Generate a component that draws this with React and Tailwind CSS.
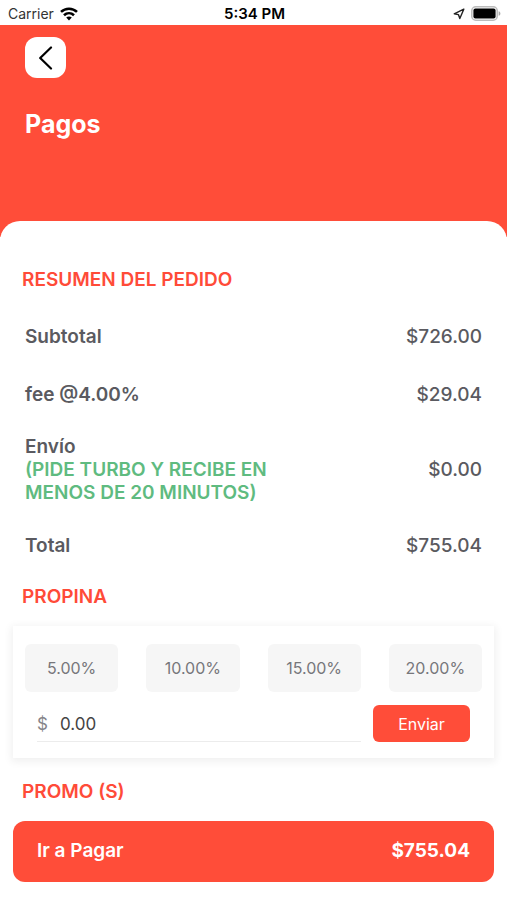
import { useState } from "react";

const summary = [
  { label: "Subtotal", amount: "$726.00" },
  { label: "fee @4.00%", amount: "$29.04" },
  { label: "Envío", note: "(PIDE TURBO Y RECIBE EN MENOS DE 20 MINUTOS)", amount: "$0.00" },
  { label: "Total", amount: "$755.04" },
];

const tips = ["5.00%", "10.00%", "15.00%", "20.00%"];

function WifiIcon() {
  return (
    <svg width="18" height="14" viewBox="0 0 18 14" fill="none" stroke="#000" strokeWidth="2.6" aria-hidden="true">
      <path d="M1 4.9C5.5.7 12.5.7 17 4.9" />
      <path d="M4 8.2C6.9 5.5 11.1 5.5 14 8.2" />
      <path d="M9 13.6 6.2 10.6C7.8 9.1 10.2 9.1 11.8 10.6Z" fill="#000" stroke="none" />
    </svg>
  );
}

function LocationIcon() {
  return (
    <svg width="12" height="12" viewBox="0 0 12 12" fill="none" stroke="#222" strokeWidth="1.4" strokeLinejoin="round" aria-hidden="true">
      <path d="M10.8 1.2 1.2 5.8 5.4 6.6 6.8 10.6Z" />
    </svg>
  );
}

function BatteryIcon() {
  return (
    <svg width="30" height="15" viewBox="0 0 30 15" aria-hidden="true">
      <rect x="0.8" y="0.8" width="25.4" height="13.4" rx="4" fill="#fff" stroke="#bcbcbc" strokeWidth="1.6" />
      <rect x="2.4" y="2.4" width="22.2" height="10.2" rx="2" fill="#000" />
      <path d="M27.6 5.2C30 5.9 30 9.1 27.6 9.8Z" fill="#a8a8a8" />
    </svg>
  );
}

function StatusBar() {
  return (
    <div className="grid h-[25px] grid-cols-3 items-center bg-white pl-2 pr-1.5 pt-0.5 text-sm text-[#333]">
      <div className="flex items-center gap-1.5">
        <span>Carrier</span>
        <WifiIcon />
      </div>
      <span className="text-center text-[15px] font-semibold text-black">5:34 PM</span>
      <div className="flex items-center justify-end gap-1.5">
        <LocationIcon />
        <BatteryIcon />
      </div>
    </div>
  );
}

function SectionTitle({ children }) {
  return <h2 className="px-[22px] text-[19px] font-semibold leading-6 text-[#ff4b38]">{children}</h2>;
}

export default function App() {
  const [tip, setTip] = useState("0.00");

  return (
    <div className="min-h-screen bg-white font-['Inter','Liberation_Sans',sans-serif]">
      <StatusBar />
      <header className="h-[212px] bg-[#ff4d39] px-[25px] pt-3 text-white">
        <button type="button" aria-label="Volver" className="flex size-[41px] items-center justify-center rounded-xl bg-white">
          <svg width="14" height="24" viewBox="0 0 14 24" fill="none" stroke="#000" strokeWidth="2.2" strokeLinecap="round" strokeLinejoin="round" aria-hidden="true">
            <path d="M12 1.5 1.2 12 12 22.5" />
          </svg>
        </button>
        <h1 className="mt-[30px] text-[25px] font-bold leading-8">Pagos</h1>
      </header>

      <main className="-mt-4 rounded-t-[20px] bg-white pb-[19px] pt-[47px]">
        <SectionTitle>RESUMEN DEL PEDIDO</SectionTitle>
        <dl className="mt-[15px] px-[25px] text-[19px] leading-[23px] text-[#5a5a60]">
          {summary.map((row) => (
            <div key={row.label} className="flex min-h-[58px] items-center justify-between py-3">
              <dt className="max-w-[250px] font-semibold">
                {row.label}
                {row.note && <span className="block text-[#5fbb80]">{row.note}</span>}
              </dt>
              <dd className="font-medium">{row.amount}</dd>
            </div>
          ))}
        </dl>

        <div className="mt-[11px]">
          <SectionTitle>PROPINA</SectionTitle>
        </div>
        <section className="mx-[13px] mt-[17px] bg-white px-3 pb-4 pt-[18px] shadow-[0_2px_8px_2px_rgba(0,0,0,0.06)]">
          <div className="grid grid-cols-4 gap-7">
            {tips.map((value) => (
              <button key={value} type="button" className="h-12 rounded-md bg-[#f6f6f6] text-base text-[#77777b]">
                {value}
              </button>
            ))}
          </div>
          <form className="mt-[13px] flex gap-3 px-3" onSubmit={(event) => event.preventDefault()}>
            <div className="flex min-w-0 flex-1 items-center gap-3 border-b border-[#ececec] pt-1 text-[17px] text-[#444]">
              <label htmlFor="tip" className="text-[#85858a]">$</label>
              <input
                id="tip"
                type="text"
                inputMode="decimal"
                value={tip}
                onChange={(event) => setTip(event.target.value)}
                className="w-full min-w-0 bg-transparent outline-none"
              />
            </div>
            <button type="submit" className="h-[37px] w-[97px] rounded-md bg-[#ff4d39] text-base text-white">
              Enviar
            </button>
          </form>
        </section>

        <div className="mt-[22px]">
          <SectionTitle>PROMO (S)</SectionTitle>
        </div>
        <div className="mt-[17px] px-[13px]">
          <button type="button" className="flex h-[61px] w-full items-center justify-between rounded-xl bg-[#ff4d39] px-6 text-[19px] font-semibold text-white">
            <span>Ir a Pagar</span>
            <span className="font-bold">$755.04</span>
          </button>
        </div>
      </main>
    </div>
  );
}
